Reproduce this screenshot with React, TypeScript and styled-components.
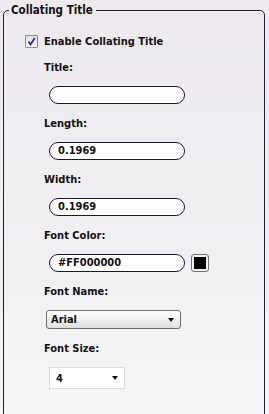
import React from "react";
import styled, { createGlobalStyle } from "styled-components";

const GlobalStyle = createGlobalStyle`
html, body {
  margin: 0;
  padding: 0;
}
body {
  width: 269px;
  height: 414px;
  overflow: hidden;
  background: linear-gradient(#eeeaf0, #f1eff2 60%, #f6f5f6);
  font-family: "DejaVu Sans Condensed", "DejaVu Sans", Verdana, sans-serif;
  color: #111;
}
`

const Group = styled.fieldset`
margin: 4px 4px 0 3px;
padding: 0;
height: 460px;
border: 1px solid #231c36;
border-radius: 5px;
box-sizing: border-box;
`

const Legend = styled.legend`
margin-left: 5px;
padding: 0 3px 0 2px;
font-size: 11.5px;
font-weight: bold;
line-height: 12px;
`

const Content = styled.div`
padding: 19px 0 0 21px;
`

const CheckRow = styled.label`
display: flex;
align-items: center;
gap: 6px;
font-size: 11px;
font-weight: bold;
height: 13px;
margin-bottom: 4px;
`

const Box = styled.span`
width: 11px;
height: 11px;
border: 1px solid #8c8c9c;
border-radius: 1px;
background: linear-gradient(#e2e2ea, #f7f7fa);
display: flex;
align-items: center;
justify-content: center;
`

const Field = styled.div`
padding-left: 19px;
margin-top: 13px;
`

const Label = styled.div`
font-size: 11px;
font-weight: bold;
line-height: 13px;
height: 13px;
`

const InputRow = styled.div`
display: flex;
align-items: center;
gap: 6px;
margin-top: 12px;
margin-left: 5px;
`

const TextBox = styled.div`
width: 136px;
height: 18px;
box-sizing: border-box;
border: 1px solid #1c182c;
border-radius: 9px;
background: #fff;
font-size: 11px;
font-weight: bold;
line-height: 16px;
padding-left: 8px;
`

const Swatch = styled.div`
width: 18px;
height: 18px;
box-sizing: border-box;
border: 1px solid #707070;
border-radius: 3px;
padding: 2px;
background: #f4f4f4;
&::after {
  content: "";
  display: block;
  width: 100%;
  height: 100%;
  background: #000;
}
`

const Select = styled.div<{ $w: number; $h: number; $plain?: boolean }>`
width: ${p => p.$w}px;
height: ${p => p.$h}px;
box-sizing: border-box;
display: flex;
align-items: center;
justify-content: space-between;
padding: 0 6px 0 ${p => (p.$plain ? 6 : 4)}px;
margin-top: 12px;
margin-left: ${p => (p.$plain ? 5 : 2)}px;
border: 1px solid ${p => (p.$plain ? "#dcdcdc" : "#6e6e6e")};
border-radius: ${p => (p.$plain ? 0 : 3)}px;
background: ${p => (p.$plain ? "#fff" : "linear-gradient(#ffffff, #f3f3f3 45%, #dedede)")};
font-size: 11px;
font-weight: bold;
`

const Arrow = styled.span`
width: 0;
height: 0;
border-left: 3px solid transparent;
border-right: 3px solid transparent;
border-top: 4px solid #111;
`

export default function App() {
  return (
    <>
      <GlobalStyle />
      <Group>
        <Legend>Collating Title</Legend>
        <Content>
          <CheckRow>
            <Box>
              <svg width="9" height="9" viewBox="0 0 9 9">
                <path d="M1.5 4.5 L3.5 7.5 L7.8 1" fill="none" stroke="#2b2bb0" strokeWidth="1.8" />
              </svg>
            </Box>
            Enable Collating Title
          </CheckRow>
          <Field>
            <Label>Title:</Label>
            <InputRow><TextBox /></InputRow>
          </Field>
          <Field>
            <Label>Length:</Label>
            <InputRow><TextBox>0.1969</TextBox></InputRow>
          </Field>
          <Field>
            <Label>Width:</Label>
            <InputRow><TextBox>0.1969</TextBox></InputRow>
          </Field>
          <Field>
            <Label>Font Color:</Label>
            <InputRow><TextBox>#FF000000</TextBox><Swatch /></InputRow>
          </Field>
          <Field>
            <Label>Font Name:</Label>
            <Select $w={135} $h={19}>Arial<Arrow /></Select>
          </Field>
          <Field>
            <Label>Font Size:</Label>
            <Select $w={76} $h={22} $plain>4<Arrow /></Select>
          </Field>
        </Content>
      </Group>
    </>
  );
}
